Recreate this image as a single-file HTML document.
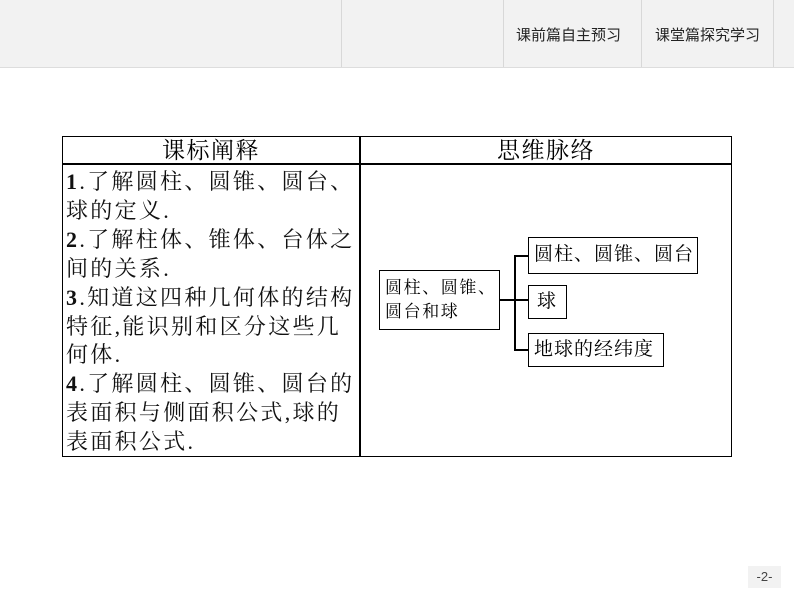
<!DOCTYPE html><html><head><meta charset="utf-8"><style>
body{margin:0;width:794px;height:596px;background:#fff;position:relative;overflow:hidden;font-family:"Liberation Serif","Noto Serif CJK SC",serif}
.hd{position:absolute;left:0;top:0;width:794px;height:67px;background:#f2f2f2;border-bottom:1px solid #ddd}
.dv{position:absolute;top:0;height:67px;width:1px;background:#d8d8d8}
.tab{position:absolute;top:24px;font:15px "Liberation Sans","Noto Sans CJK SC",sans-serif;color:#222}
.tbl{position:absolute;left:62px;top:136px;width:670px;height:321px;border:1.5px solid #000;box-sizing:border-box}
.b{position:absolute;border:1.5px solid #000;box-sizing:border-box;font-size:19px;letter-spacing:1px;line-height:24px;padding-left:5px;white-space:nowrap}
.l{position:absolute;background:#000}
.txt{position:absolute;left:66px;top:168px;font-size:22px;letter-spacing:2.3px;line-height:28.9px;width:300px;color:#111;white-space:nowrap}
</style></head><body>
<div class="hd"></div>
<div class="dv" style="left:341px"></div><div class="dv" style="left:503px"></div><div class="dv" style="left:641px"></div><div class="dv" style="left:773px"></div>
<div class="tab" style="left:516px">课前篇自主预习</div>
<div class="tab" style="left:655px">课堂篇探究学习</div>
<div class="tbl"></div>
<div class="l" style="left:62px;top:163px;width:670px;height:1.5px"></div>
<div class="l" style="left:359px;top:136px;width:1.5px;height:321px"></div>
<div style="position:absolute;left:62px;top:137px;width:298px;text-align:center;font-size:23px;letter-spacing:1.5px;line-height:27px">课标阐释</div>
<div style="position:absolute;left:360px;top:137px;width:372px;text-align:center;font-size:23px;letter-spacing:1.5px;line-height:27px">思维脉络</div>
<div class="txt"><b>1</b>.了解圆柱、圆锥、圆台、<br>球的定义.<br><b>2</b>.了解柱体、锥体、台体之<br>间的关系.<br><b>3</b>.知道这四种几何体的结构<br>特征,能识别和区分这些几<br>何体.<br><b>4</b>.了解圆柱、圆锥、圆台的<br>表面积与侧面积公式,球的<br>表面积公式.</div>
<div class="b" style="left:379px;top:270px;width:121px;height:60px;padding-top:5px;font-size:17px;letter-spacing:1.6px;line-height:24px;padding-left:5px">圆柱、圆锥、<br>圆台和球</div>
<div class="b" style="left:528px;top:237px;width:170px;height:37px;padding-top:5px">圆柱、圆锥、圆台</div>
<div class="b" style="left:528px;top:285px;width:39px;height:34px;padding-top:4px;padding-left:8px">球</div>
<div class="b" style="left:528px;top:333px;width:136px;height:34px;padding-top:4px">地球的经纬度</div>
<div class="l" style="left:500px;top:299px;width:28px;height:1.5px"></div>
<div class="l" style="left:514px;top:255px;width:1.5px;height:96px"></div>
<div class="l" style="left:514px;top:255px;width:14px;height:1.5px"></div>
<div class="l" style="left:514px;top:349px;width:14px;height:1.5px"></div>
<div style="position:absolute;left:748px;top:566px;width:33px;height:22px;background:#f2f2f2;font:13px 'Liberation Sans',sans-serif;line-height:22px;text-align:center;color:#444">-2-</div>
</body></html>
